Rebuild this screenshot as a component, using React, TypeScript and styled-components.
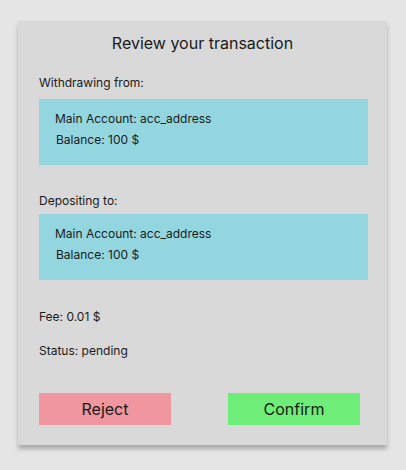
import React from "react";
import styled, { createGlobalStyle } from "styled-components";

const Global = createGlobalStyle`
  html, body { margin: 0; padding: 0; background: #e5e5e5; }
  body { font-family: Inter, "Noto Sans", sans-serif; color: #1a1a1a; }
`;

const Page = styled.div`
  width: 406px;
  height: 470px;
  padding: 21px 19px 0 18px;
  box-sizing: border-box;
`;

const Card = styled.div`
  width: 369px;
  height: 424px;
  box-sizing: border-box;
  background: #d9d9d9;
  box-shadow: 0 4px 4px rgba(0, 0, 0, 0.25);
  padding: 12px 19px 0 21px;
  display: flex;
  flex-direction: column;
`;

const Title = styled.h1`
  margin: 0;
  font-size: 16px;
  font-weight: 400;
  line-height: 20px;
  text-align: center;
  padding-right: 2px;
`;

const Label = styled.div<{ $mt: number }>`
  margin-top: ${(p) => p.$mt}px;
  font-size: 12px;
  line-height: 15px;
`;

const AccountBox = styled.div<{ $mt: number }>`
  margin-top: ${(p) => p.$mt}px;
  height: 66px;
  background: #93d6e0;
  box-sizing: border-box;
  padding: 12px 0 0 16px;
  display: flex;
  flex-direction: column;
  gap: 6px;
  font-size: 12px;
  line-height: 15px;
`;

const BoxLine = styled.div<{ $indent?: number }>`
  padding-left: ${(p) => p.$indent ?? 0}px;
`;

const Actions = styled.div`
  margin-top: 35px;
  padding-right: 8px;
  display: flex;
  justify-content: space-between;
`;

const Button = styled.button<{ $bg: string }>`
  width: 132px;
  height: 32px;
  border: none;
  border-radius: 0;
  background: ${(p) => p.$bg};
  font-family: Inter, "Noto Sans", sans-serif;
  font-size: 16px;
  line-height: 20px;
  color: #1a1a1a;
  padding: 0;
  cursor: pointer;
`;

function Account({ mt }: { mt: number }) {
  return (
    <AccountBox $mt={mt}>
      <BoxLine>Main Account: acc_address</BoxLine>
      <BoxLine $indent={1}>Balance: 100 $</BoxLine>
    </AccountBox>
  );
}

export default function App() {
  return (
    <Page>
      <Global />
      <Card>
        <Title>Review your transaction</Title>
        <Label $mt={22}>Withdrawing from:</Label>
        <Account mt={9} />
        <Label $mt={28}>Depositing to:</Label>
        <Account mt={6} />
        <Label $mt={29}>Fee: 0.01 $</Label>
        <Label $mt={19}>Status: pending</Label>
        <Actions>
          <Button $bg="#ef969e">Reject</Button>
          <Button $bg="#6eed78">Confirm</Button>
        </Actions>
      </Card>
    </Page>
  );
}
